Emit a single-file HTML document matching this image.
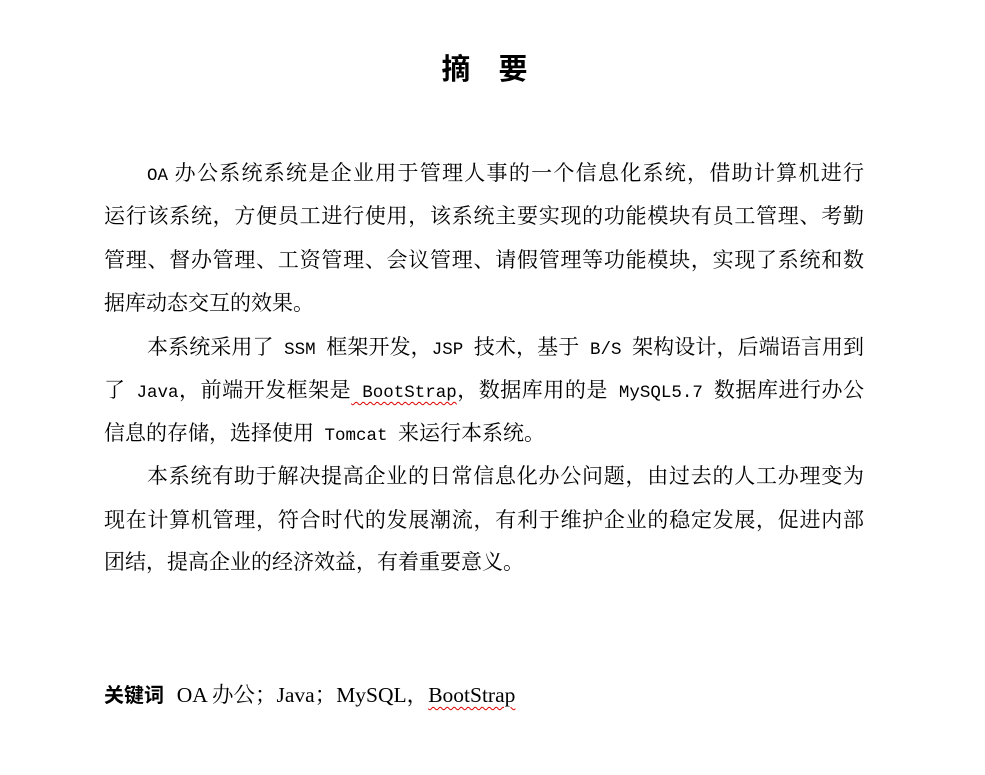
<!DOCTYPE html>
<html><head><meta charset="utf-8"><style>
body{margin:0;width:985px;height:775px;background:#fff;position:relative;overflow:hidden;color:#000}
.t{position:absolute;top:46px;left:-8px;width:985px;text-align:center;font:bold 29px/42px "Noto Sans CJK SC",sans-serif}
.t span{display:inline-block;width:29px;margin:0 14px}
.l{position:absolute;left:104px;width:760px;height:43px;line-height:43px;font-family:"Noto Serif CJK SC","Noto Sans CJK SC",serif;font-size:21px;white-space:nowrap}
.j{text-align:justify;text-align-last:justify}
.i{left:147px;width:717px}
.m{font-family:"Liberation Mono",monospace;font-size:17.5px}
.w{text-decoration:underline wavy #d00;text-decoration-thickness:1px;text-underline-offset:4px}
.k{position:absolute;left:104px;top:676px;font-family:"Liberation Serif","Noto Serif CJK SC",serif;font-size:21.5px;line-height:36px;white-space:nowrap}
.k b{font-family:"Noto Sans CJK SC",sans-serif;font-weight:bold;font-size:20px;margin-right:2px}
</style></head><body>
<div class="t"><span>摘</span><span>要</span></div>
<div class="l j i" style="top:151px"><span class="m">OA</span> 办公系统系统是企业用于管理人事的一个信息化系统，借助计算机进行</div>
<div class="l j" style="top:194px">运行该系统，方便员工进行使用，该系统主要实现的功能模块有员工管理、考勤</div>
<div class="l j" style="top:238px">管理、督办管理、工资管理、会议管理、请假管理等功能模块，实现了系统和数</div>
<div class="l" style="top:281px">据库动态交互的效果。</div>
<div class="l j i" style="top:325px">本系统采用了<span class="m"> SSM </span>框架开发，<span class="m">JSP </span>技术，基于<span class="m"> B/S </span>架构设计，后端语言用到</div>
<div class="l j" style="top:368px">了<span class="m"> Java</span>，前端开发框架是<span class="m w"> BootStrap</span>，数据库用的是<span class="m"> MySQL5.7 </span>数据库进行办公</div>
<div class="l" style="top:411px">信息的存储，选择使用<span class="m"> Tomcat </span>来运行本系统。</div>
<div class="l j i" style="top:454px">本系统有助于解决提高企业的日常信息化办公问题，由过去的人工办理变为</div>
<div class="l j" style="top:498px">现在计算机管理，符合时代的发展潮流，有利于维护企业的稳定发展，促进内部</div>
<div class="l" style="top:540px">团结，提高企业的经济效益，有着重要意义。</div>
<div class="k"><b>关键词</b>&nbsp; OA 办公；Java；MySQL，<span class="w">BootStrap</span></div>
</body></html>
